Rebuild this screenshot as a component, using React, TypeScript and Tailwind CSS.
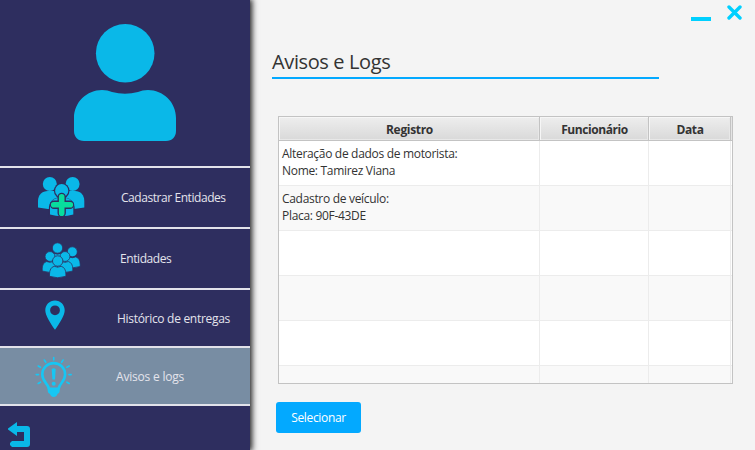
import type { ReactNode } from "react";

const CYAN = "#0ab8e8";
const NAVY = "#2e2e5f";

function UserIcon() {
  return (
    <svg width="104" height="120" viewBox="73 22 104 120" fill={CYAN}>
      <circle cx="125.2" cy="53.2" r="29.3" />
      <path d="M102 90 C106 90 109 90.8 112 92 Q125 95.5 138 92 C141 90.8 144 90 148 90 C163 90 176 102 176 118 V131 C176 137 172 141 166 141 H84 C78 141 74 137 74 131 V118 C74 102 87 90 102 90 Z" />
    </svg>
  );
}

function AddGroupIcon() {
  return (
    <svg width="48" height="42" viewBox="37 176 48 42" fill={CYAN}>
      <circle cx="49.8" cy="184" r="7" />
      <circle cx="72.6" cy="184" r="7" />
      <path d="M38 207.5 V201 C38 195 42 191 48 191 H75 C80.5 191 84.3 195 84.3 201 V207.5 L74 209 H48 Z" />
      <circle cx="61.7" cy="190.7" r="7.8" fill={NAVY} />
      <path d="M48.8 218 V209 C48.8 202 53 197 61.7 197 S74.700 202 74.700 209 V218 Z" fill={NAVY} />
      <circle cx="61.7" cy="190.7" r="6.6" />
      <path d="M50 214.500 V207 C50 201.500 54 198 58 198 H65.500 C70 198 73.300 201.500 73.300 207 V214.500 Q61.700 218 50 214.500 Z" />
      <g fill="none" strokeLinecap="round">
        <path d="M61.700 197 V213 M54 204.700 H70" stroke={NAVY} strokeWidth="8.400" />
        <path d="M61.700 196.700 V213.200 M53.700 204.700 H70.300" stroke="#08dd9d" strokeWidth="5.600" />
      </g>
    </svg>
  );
}

function Person({ x, y, s = 1 }: { x: number; y: number; s?: number }) {
  return (
    <g transform={`translate(${x} ${y}) scale(${s})`} fill={CYAN} stroke={NAVY} strokeWidth="0.8">
      <path d="M-3.500 5.300 Q0 7 3.500 5.300 C6.500 6 8.200 9 8.200 13 V15.300 Q0 18.200 -8.200 15.300 V13 C-8.200 9 -6.500 6 -3.500 5.300 Z" />
      <circle r="5.200" />
    </g>
  );
}

function GroupIcon() {
  return (
    <svg width="40" height="37" viewBox="41 242 40 37">
      <Person x={72.3} y={251.8} s={0.96} />
      <Person x={57.5} y={248} />
      <Person x={50} y={256.5} s={0.95} />
      <Person x={65} y={256.5} s={0.95} />
      <Person x={57.7} y={261} />
    </svg>
  );
}

function PinIcon() {
  return (
    <svg width="20" height="30" viewBox="44.5 299.5 20 30" fill={CYAN}>
      <path fillRule="evenodd" d="M54.500 300 C49 300 44.800 304.300 44.800 309.700 C44.800 315 49.500 322 54.500 329.300 C59.500 322 64.200 315 64.200 309.700 C64.200 304.300 60 300 54.500 300 Z M54.500 304.900 A4.900 4.900 0 1 1 54.500 314.700 A4.900 4.900 0 1 1 54.500 304.900 Z" />
    </svg>
  );
}

function BulbIcon() {
  return (
    <svg width="38" height="42" viewBox="34.5 356 38 42" fill="none" stroke="#16c7f4" strokeLinecap="round">
      <path d="M48.300 388.500 C47.500 383.500 41.800 381.500 41.800 374.500 A11.400 11.400 0 0 1 64.600 374.500 C64.600 381.500 58.900 383.500 58.200 388.500" strokeWidth="2.600" />
      <path d="M47.200 387.500 H59.200 V391 Q59.200 393 57 394 C56 398 50.500 398 49.500 394 Q47.200 393 47.200 391 Z" fill="#16c7f4" stroke="none" />
      <path d="M53.200 357.500 V360 M43.800 360 L45.300 362.300 M62.600 360 L61.100 362.300 M37.700 366 L40 367.300 M68.700 366 L66.400 367.300 M35.700 374.600 H38 M68.400 374.600 H70.700 M37.700 383.500 L40 382.200 M68.700 383.500 L66.400 382.200" strokeWidth="1.600" />
      <path d="M51.200 369 Q53.200 367.500 55.200 369 L54.500 379.500 H51.900 Z" fill="#16c7f4" stroke="none" />
      <circle cx="53.200" cy="383.700" r="2" fill="#16c7f4" stroke="none" />
    </svg>
  );
}

function BackIcon() {
  return (
    <svg width="23" height="26" viewBox="8 422 23 26" fill={CYAN}>
      <path d="M17 422 V426 H27 Q30 426 30 429 V444 Q30 447 27 447 H12 L10 445 V443 L12 441 H24 V432 H17 V436 L8 429.500 V428.500 Z" />
    </svg>
  );
}

function MenuItem({ className, icon, iconClass, label, labelClass }: {
  className: string;
  icon: ReactNode;
  iconClass: string;
  label: string;
  labelClass: string;
}) {
  return (
    <button className={`flex w-full shrink-0 items-start border-b-2 border-[#e2e2ea] text-left ${className}`}>
      <span className={`shrink-0 ${iconClass}`}>{icon}</span>
      <span className={`text-[12px] leading-4 whitespace-nowrap text-[#e4e4ec] ${labelClass}`}>{label}</span>
    </button>
  );
}

const columns = "grid grid-cols-[261px_109px_82px_1px]";
const headCell =
  "flex items-center justify-center border-r border-[#c3c3c3] bg-linear-to-b from-[#eeeeee] to-[#d9d9d9] pt-0.5 pl-px shadow-[inset_1px_1px_0_#f6f6f6,inset_-1px_-1px_0_#e8e8e8]";

const rows: string[][] = [
  ["Alteração de dados de motorista:", "Nome: Tamirez Viana"],
  ["Cadastro de veículo:", "Placa: 90F-43DE"],
  [],
  [],
  [],
  [],
];

export default function App() {
  return (
    <div className="flex h-[450px] w-[755px] overflow-hidden bg-[#f4f4f4] font-['Open_Sans','Noto_Sans',sans-serif] text-[#333333]">
      <aside className="z-10 flex w-[250px] shrink-0 flex-col bg-[#2e2e5f] shadow-[1px_0_6px_1px_rgba(0,0,0,0.9)]">
        <div className="flex h-[168px] shrink-0 justify-center border-b-2 border-[#e2e2ea] pt-[22px]">
          <UserIcon />
        </div>
        <nav className="flex flex-col">
          <MenuItem className="h-[61px]" icon={<AddGroupIcon />} iconClass="ml-[37px] mt-2" label="Cadastrar Entidades" labelClass="ml-9 mt-[22px] tracking-[-0.44px]" />
          <MenuItem className="h-[61px]" icon={<GroupIcon />} iconClass="ml-[41px] mt-[13px]" label="Entidades" labelClass="ml-[39px] mt-[22px] tracking-[-0.42px]" />
          <MenuItem className="h-[58px]" icon={<PinIcon />} iconClass="ml-[44.5px] mt-[9.5px]" label="Histórico de entregas" labelClass="ml-[52.5px] mt-[21px] tracking-[-0.3px]" />
          <MenuItem className="h-[58px] bg-[#788da3]" icon={<BulbIcon />} iconClass="ml-[34.5px] mt-2" label="Avisos e logs" labelClass="ml-[43.5px] mt-[21px] tracking-[-0.2px]" />
        </nav>
        <button className="mt-4 ml-2 w-[23px]">
          <BackIcon />
        </button>
      </aside>

      <main className="flex flex-1 flex-col">
        <div className="flex h-[22px] justify-end gap-4 pr-[13px]">
          <button className="mt-[17px] h-1 w-5 bg-[#00d0ff]" aria-label="Minimizar" />
          <button className="mt-[5px] h-[15px] w-[15px]" aria-label="Fechar">
            <svg width="15" height="15" viewBox="0 0 15 15" stroke="#00d0ff" strokeWidth="3.4" strokeLinecap="round">
              <path d="M2 2 L13 13 M13 2 L2 13" />
            </svg>
          </button>
        </div>
        <h1 className="mt-[26px] ml-[22px] h-[31px] w-[387px] border-b-2 border-[#03a9ff] text-[20px] leading-7 tracking-[-0.38px]">
          Avisos e Logs
        </h1>

        <section className="mt-[37px] ml-7 flex h-[268px] w-[455px] flex-col overflow-hidden border border-[#c3c3c3] bg-white text-[12px]">
          <div className={`${columns} h-6 shrink-0 border-b border-[#c3c3c3] font-bold`}>
            <div className={headCell}><span className="tracking-[-0.32px]">Registro</span></div>
            <div className={headCell}><span className="tracking-[-0.42px]">Funcionário</span></div>
            <div className={headCell}><span className="tracking-[-0.4px]">Data</span></div>
            <div className="bg-[#e4e4e4]" />
          </div>
          {rows.map((lines, i) => (
            <div key={i} className={`${columns} h-[45px] shrink-0 border-b border-[#ececec] ${i % 2 ? "bg-[#f9f9f9]" : "bg-white"}`}>
              <div className="border-r border-[#ececec] pt-1 pl-[3px] leading-[17px] tracking-[-0.31px] whitespace-nowrap">
                {lines.map((line) => (
                  <div key={line}>{line}</div>
                ))}
              </div>
              <div className="border-r border-[#ececec]" />
              <div className="border-r border-[#ececec]" />
            </div>
          ))}
        </section>

        <button className="mt-[18px] ml-[26px] flex h-[31px] w-[85px] items-center justify-center rounded-[3px] bg-[#03a9ff] text-[12px] text-white">
          <span className="tracking-[-0.34px]">Selecionar</span>
        </button>
      </main>
    </div>
  );
}
